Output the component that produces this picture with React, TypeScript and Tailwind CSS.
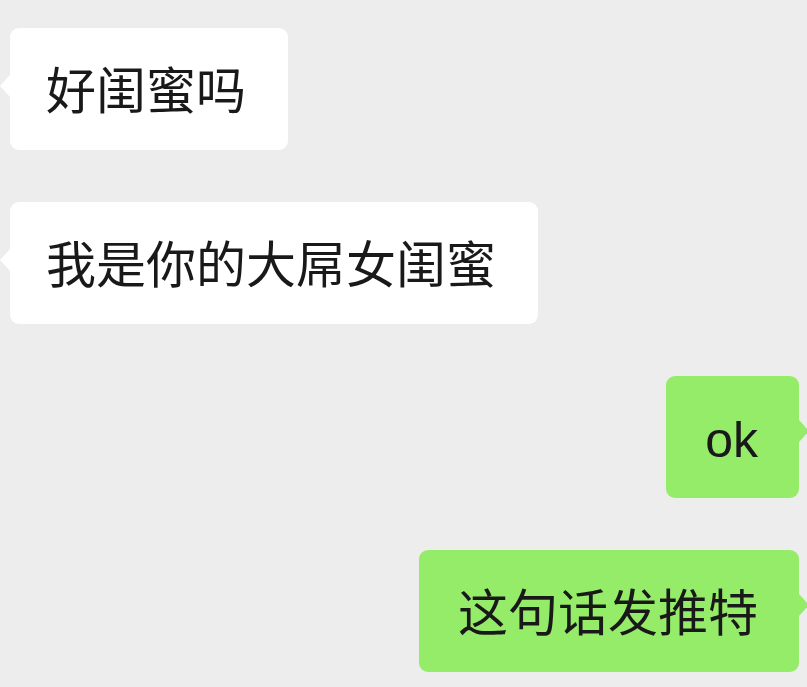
const messages = [
  { id: 1, from: "them", text: "好闺蜜吗" },
  { id: 2, from: "them", text: "我是你的大屌女闺蜜" },
  { id: 3, from: "me", text: "ok" },
  { id: 4, from: "me", text: "这句话发推特" },
];

function Bubble({ from, text }: { from: string; text: string }) {
  const mine = from === "me";
  return (
    <div className={mine ? "flex justify-end pr-[8px]" : "flex justify-start pl-[10px]"}>
      <div
        className={
          mine
            ? "relative rounded-[9px] bg-[#95ec69] pl-[39px] pr-[41px] pt-[29px] pb-[23px]"
            : "relative rounded-[9px] bg-white pl-[36px] pr-[42px] pt-[29px] pb-[23px]"
        }
      >
        {mine ? (
          <span className="absolute right-[-10px] top-[44px] h-0 w-0 border-y-[11px] border-l-[10px] border-y-transparent border-l-[#95ec69]" />
        ) : (
          <span className="absolute left-[-10px] top-[47px] h-0 w-0 border-y-[11px] border-r-[10px] border-y-transparent border-r-white" />
        )}
        <p className="text-[50px] leading-[70px] text-[#191919]">{text}</p>
      </div>
    </div>
  );
}

export default function App() {
  return (
    <div
      className="h-[687px] w-full overflow-hidden bg-[#ededed] pt-[28px]"
      style={{ fontFamily: '"Liberation Sans", "Noto Sans CJK SC", sans-serif' }}
    >
      <div className="flex flex-col gap-[52px]">
        {messages.map((m) => (
          <Bubble key={m.id} from={m.from} text={m.text} />
        ))}
      </div>
    </div>
  );
}
